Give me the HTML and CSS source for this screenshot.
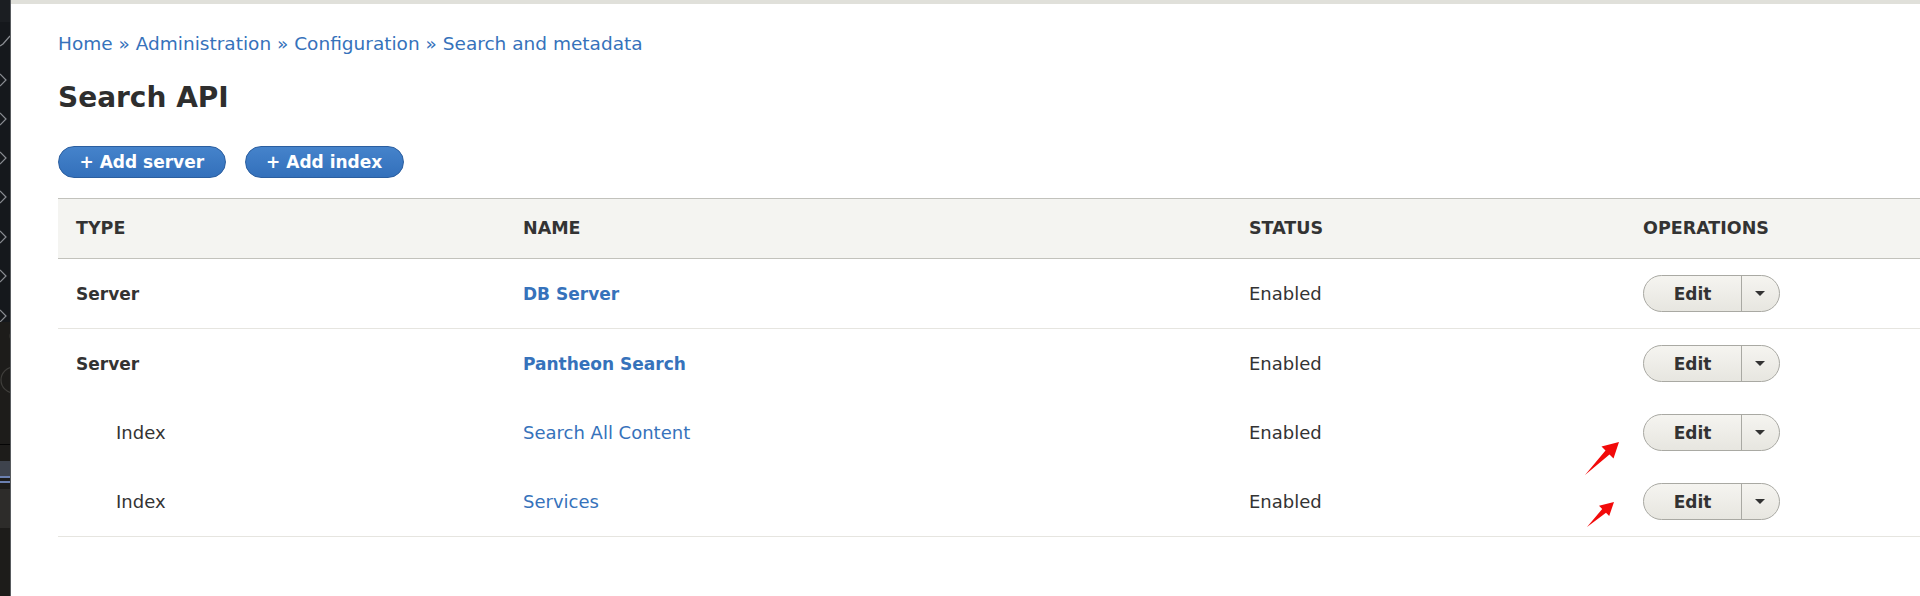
FILE: index.html
```html
<!DOCTYPE html>
<html lang="en">
<head>
<meta charset="utf-8">
<title>Search API</title>
<link rel="stylesheet" href="styles.css">
</head>
<body>
<aside class="sidebar">
  <svg class="sidebar-art" width="10" height="596" viewBox="0 0 10 596">
    <rect x="0" y="0" width="10" height="322" fill="#15181c"/>
    <rect x="0" y="0" width="10" height="22" fill="#1b1e22"/>
    <polyline points="0,46 3,44 10,36" fill="none" stroke="#8a8d92" stroke-width="1.3"/>
    <polyline points="0,74 6,80 0,86" fill="none" stroke="#8a8d92" stroke-width="1.2"/>
    <polyline points="0,113 6,119 0,125" fill="none" stroke="#8a8d92" stroke-width="1.2"/>
    <polyline points="0,152 6,158 0,164" fill="none" stroke="#8a8d92" stroke-width="1.2"/>
    <polyline points="0,191 6,197 0,203" fill="none" stroke="#8a8d92" stroke-width="1.2"/>
    <polyline points="0,231 6,237 0,243" fill="none" stroke="#8a8d92" stroke-width="1.2"/>
    <polyline points="0,270 6,276 0,282" fill="none" stroke="#8a8d92" stroke-width="1.2"/>
    <polyline points="0,310 6,316 0,322" fill="none" stroke="#8a8d92" stroke-width="1.2"/>
    <rect x="0" y="322" width="10" height="274" fill="#1d1c1a"/>
    <circle cx="16" cy="336" r="6" fill="none" stroke="#3a3936" stroke-width="1.2"/>
    <circle cx="14" cy="380" r="13" fill="none" stroke="#3f3e3b" stroke-width="1.2"/>
    <rect x="0" y="444" width="10" height="1" fill="#050505"/>
    <rect x="0" y="461" width="10" height="17" fill="#3e434d"/>
    <rect x="0" y="476" width="10" height="2" fill="#6b80b0"/>
    <rect x="0" y="481" width="10" height="2" fill="#6b80b0"/>
    <rect x="0" y="489" width="10" height="39" fill="#2d2c2a"/>
  </svg>
</aside>

<main class="main">
  <nav class="breadcrumb">
    <a href="#">Home</a> » <a href="#">Administration</a> » <a href="#">Configuration</a> » <a href="#">Search and metadata</a>
  </nav>

  <h1 class="page-title">Search API</h1>

  <div class="actions">
    <a class="btn-primary" href="#">+ Add server</a>
    <a class="btn-primary" href="#">+ Add index</a>
  </div>

  <table class="overview">
    <colgroup>
      <col class="col-type">
      <col class="col-name">
      <col class="col-status">
      <col class="col-ops">
    </colgroup>
    <thead>
      <tr>
        <th>TYPE</th>
        <th>NAME</th>
        <th>STATUS</th>
        <th>OPERATIONS</th>
      </tr>
    </thead>
    <tbody>
      <tr class="row-sep">
        <td><strong class="bold">Server</strong></td>
        <td><a class="bold" href="#">DB Server</a></td>
        <td>Enabled</td>
        <td><div class="dropbutton"><span class="db-main">Edit</span><span class="db-toggle"><span class="tri"></span></span></div></td>
      </tr>
      <tr>
        <td><strong class="bold">Server</strong></td>
        <td><a class="bold" href="#">Pantheon Search</a></td>
        <td>Enabled</td>
        <td><div class="dropbutton"><span class="db-main">Edit</span><span class="db-toggle"><span class="tri"></span></span></div></td>
      </tr>
      <tr>
        <td class="indent">Index</td>
        <td><a href="#">Search All Content</a></td>
        <td>Enabled</td>
        <td><div class="dropbutton"><span class="db-main">Edit</span><span class="db-toggle"><span class="tri"></span></span></div></td>
      </tr>
      <tr class="row-last">
        <td class="indent">Index</td>
        <td><a href="#">Services</a></td>
        <td>Enabled</td>
        <td><div class="dropbutton"><span class="db-main">Edit</span><span class="db-toggle"><span class="tri"></span></span></div></td>
      </tr>
    </tbody>
  </table>
</main>

<svg class="annotations" width="1920" height="596" viewBox="0 0 1920 596">
  <polygon points="1585,475 1605.5,450.5 1601.5,446.5 1619,442 1613.5,458.5 1609.5,454.5" fill="#f20a0a"/>
  <polygon points="1587,527 1602.2,509 1599,505.8 1614,502 1609.2,516 1606,512.8" fill="#f20a0a"/>
</svg>
</body>
</html>
```

FILE: styles.css
```css
html, body {
  margin: 0;
  padding: 0;
}

body {
  position: relative;
  display: flex;
  height: 596px;
  overflow: hidden;
  background: #ffffff;
  color: #333333;
  font-family: "DejaVu Sans", "Liberation Sans", sans-serif;
}

.sidebar {
  flex: 0 0 10px;
  width: 10px;
  border-right: 1px solid #585b5f;
  background: #15181c;
  overflow: hidden;
}

.sidebar-art {
  display: block;
}

.main {
  flex: 1 1 auto;
  min-width: 0;
  border-top: 4px solid #e0e0da;
  padding: 27px 0 0 47px;
}

a {
  color: #3672bb;
  text-decoration: none;
}

.breadcrumb {
  font-size: 18.5px;
  line-height: 26px;
  color: #3672bb;
  white-space: nowrap;
}

.page-title {
  margin: 23px 0 0 0;
  font-size: 28px;
  line-height: 36px;
  font-weight: bold;
  color: #2e2e2e;
}

.actions {
  margin-top: 30px;
  display: flex;
  gap: 19px;
}

.btn-primary {
  display: inline-flex;
  align-items: center;
  box-sizing: border-box;
  height: 32px;
  padding: 0 20.5px;
  border: 1px solid #2b5e9f;
  border-radius: 16px;
  background: linear-gradient(#4583cb, #3370bb);
  color: #ffffff;
  font-size: 17px;
  font-weight: bold;
  white-space: nowrap;
}

.overview {
  margin-top: 20px;
  width: 100%;
  table-layout: fixed;
  border-collapse: collapse;
}

.col-type { width: 447px; }
.col-name { width: 726px; }
.col-status { width: 394px; }

.overview th {
  background: #f4f4f1;
  border-top: 1px solid #c2c2bc;
  border-bottom: 1px solid #c2c2bc;
  padding: 17px 18px;
  line-height: 25px;
  font-size: 17.5px;
  font-weight: bold;
  text-align: left;
  color: #333333;
  white-space: nowrap;
}

.overview td {
  padding: 16px 18px;
  font-size: 18px;
  line-height: 24px;
  vertical-align: middle;
  white-space: nowrap;
}

.overview tr.row-sep td,
.overview tr.row-last td {
  border-bottom: 1px solid #e6e5e0;
}

.overview td.indent {
  padding-left: 58px;
}

.bold {
  font-weight: bold;
  font-size: 17px;
}

strong.bold {
  color: #333333;
}

.dropbutton {
  display: inline-flex;
  box-sizing: border-box;
  height: 37px;
  border: 1px solid #a9a9a3;
  border-radius: 19px;
  background: linear-gradient(#f5f4f0, #e7e6e0);
  overflow: hidden;
}

.db-main {
  display: flex;
  align-items: center;
  justify-content: center;
  width: 97px;
  font-size: 17px;
  font-weight: bold;
  color: #333333;
}

.db-toggle {
  display: flex;
  align-items: center;
  justify-content: center;
  width: 37px;
  border-left: 1px solid #a9a9a3;
}

.tri {
  width: 0;
  height: 0;
  border-left: 5px solid transparent;
  border-right: 5px solid transparent;
  border-top: 5px solid #333333;
  margin-left: -2px;
}

.annotations {
  position: absolute;
  top: 0;
  left: 0;
  pointer-events: none;
}
```
